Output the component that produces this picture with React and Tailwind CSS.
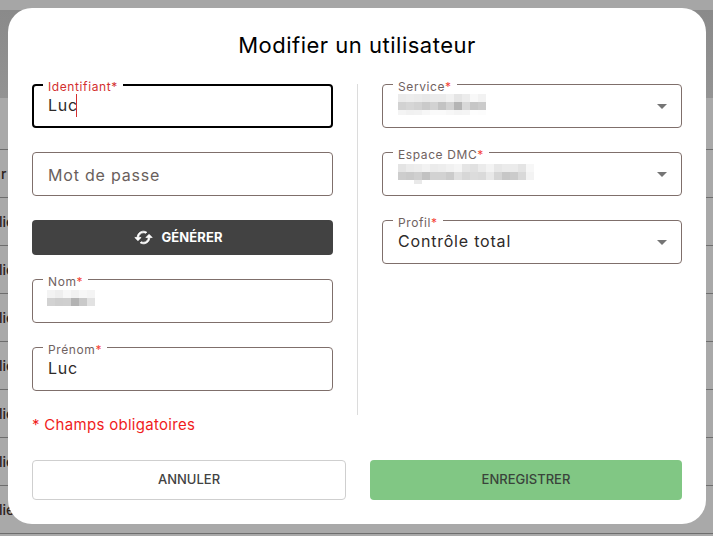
import React from "react";

const font = "font-['Inter','Noto_Sans',sans-serif]";

function Pixels({ rows, w = 8, className = "" }) {
  const total = rows.reduce((a, r) => a + r.h, 0);
  const cols = Math.max(...rows.map((r) => r.c.length));
  let y = 0;
  return (
    <svg width={cols * w} height={total} className={className} shapeRendering="crispEdges">
      {rows.map((r, i) => {
        const top = y;
        y += r.h;
        return r.c.map((c, j) =>
          c ? <rect key={i + "-" + j} x={j * w} y={top} width={w} height={r.h} fill={c} /> : null
        );
      })}
    </svg>
  );
}

function Field({ label, required = true, focused = false, children, caret = false }) {
  return (
    <div
      className={`relative h-[44px] shrink-0 rounded-[4px] bg-white flex items-center pr-[14px] ${
        focused ? "border-2 border-black pl-[14px]" : "border border-[#7f6f6b] pl-[15px]"
      }`}
    >
      {label && (
        <span
          className={`absolute ${focused ? "left-[9px] -top-[5px]" : "left-[10px] -top-[4px]"} bg-white px-[5px] text-[12px] leading-[12px] tracking-[0.6px] ${
            focused ? "text-[#d32f2f]" : "text-[#6f625f]"
          }`}
        >
          {label}
          {required && <span className={focused ? "text-[#d32f2f]" : "text-[#f44336]"}>*</span>}
        </span>
      )}
      <div className="flex-1 min-w-0 flex items-center">{children}</div>
      {caret && (
        <svg width="10" height="5" viewBox="0 0 10 5" className="shrink-0">
          <path d="M0 0h10L5 5z" fill="#757575" />
        </svg>
      )}
    </div>
  );
}

const V = "-mt-[2px] text-[16px] leading-[24px] tracking-[0.8px] text-[#2e2a29]";

export default function App() {
  const rowTexts = ["r", "lie", "lie", "lie", "lie", "lie", "lie", "lie"];
  return (
    <div className={`relative h-[536px] w-[713px] overflow-hidden bg-[#a9a9a9] ${font}`}>
      <div className="h-[10px] bg-[#a6a6a6]" />
      <div className="h-[88px] bg-gradient-to-b from-[#8a8a8a] to-[#939393]" />
      <div className="h-[52px] border-b border-[#6e6e6e]" />
      {rowTexts.map((t, i) => (
        <div key={i} className="h-[48px] border-b border-[#6e6e6e] flex items-center">
          <span className={`text-[14px] font-medium text-[#2b211d] ${i === 0 ? "ml-[1px]" : "-ml-[1px]"}`}>{t}</span>
        </div>
      ))}

      <div className="absolute left-[8px] top-[8px] h-[516px] w-[698px] rounded-[24px] bg-white px-[24px] flex flex-col">
        <h1 className="h-[76px] shrink-0 pt-[22px] text-center text-[22px] leading-[30px] tracking-[0.5px] font-normal text-black">
          Modifier un utilisateur
        </h1>
        <div className="flex h-[351px] shrink-0">
          <div className="w-[301px] flex flex-col">
            <Field label="Identifiant" focused>
              <span className={V}>Luc</span>
              <span className="absolute left-[42px] top-[8px] h-[23px] w-px bg-[#d32f2f]" />
            </Field>
            <div className="mt-[24px]">
              <Field>
                <span className="mt-[1px] text-[16px] leading-[24px] tracking-[0.8px] text-[#6a5f5c]">Mot de passe</span>
              </Field>
            </div>
            <button className="mt-[24px] h-[35px] shrink-0 rounded-[4px] bg-[#424242] text-white flex items-center justify-center gap-[8px] pr-[8px] text-[13px] font-bold tracking-[0.1px]">
              <svg width="19" height="19" viewBox="0 0 24 24" fill="currentColor" stroke="currentColor" strokeWidth="0.9">
                <path d="M19 8l-4 4h3c0 3.31-2.69 6-6 6-1.01 0-1.97-.25-2.8-.7l-1.46 1.46C8.97 19.54 10.43 20 12 20c4.42 0 8-3.58 8-8h3l-4-4zM6 12c0-3.31 2.69-6 6-6 1.01 0 1.97.25 2.8.7l1.46-1.46C15.03 4.46 13.57 4 12 4c-4.42 0-8 3.58-8 8H1l4 4 4-4H6z" />
              </svg>
              GÉNÉRER
            </button>
            <div className="mt-[24px]">
              <Field label="Nom">
                <Pixels
                  className="-ml-[1px] -mt-[6px]"
                  rows={[
                    { h: 8, c: ["#f3f3f3", "#eeeeee", "#f7f7f7", "#f1f1f1", "#f7f7f7", "#f4f4f4"] },
                    { h: 8, c: ["#d2d2d2", "#cecece", "#cfcfcf", "#b3b3b3", "#c9c9c9", "#e2e2e2"] },
                  ]}
                />
              </Field>
            </div>
            <div className="mt-[24px]">
              <Field label="Prénom">
                <span className={V}>Luc</span>
              </Field>
            </div>
            <p className="mt-[24px] text-[15px] leading-[20px] tracking-[0.3px] text-[#f01c1c]">* Champs obligatoires</p>
          </div>
          <div className="ml-[24px] w-px bg-[#dcdcdc] h-[331px]" />
          <div className="ml-[24px] w-[300px] flex flex-col gap-[24px]">
            <Field label="Service" caret>
              <Pixels
                className="-mt-[3px]"
                rows={[
                  { h: 8, c: ["#ebebeb", "#ededed", "#ebebeb", "#e8e8e8", "#ebebeb", "#ebebeb", "#f1f1f1", "#e5e5e5", "#ececec", "#f8f8f8", "#f2f2f2"] },
                  { h: 8, c: ["#d2d2d2", "#d6d6d6", "#d2d2d2", "#cacaca", "#d2d2d2", "#c3c3c3", "#d2d2d2", "#b4b4b4", "#d8d8d8", "#c6c6c6", "#cbcbcb"] },
                  { h: 5, c: ["#f4f4f4", "#f1f1f1", "#f2f2f2", "#f7f7f7", "#fafafa", "#fafafa", "#f7f7f7", "#f4f4f4", "#f5f5f5", "#fdfdfd", "#fcfcfc"] },
                ]}
              />
            </Field>
            <Field label="Espace DMC" caret>
              <Pixels
                rows={[
                  { h: 8, c: ["#e4e4e4", "#ebebeb", "#ededed", "#f2f2f2", "#ebebeb", "#ededed", "#f1f1f1", "#f5f5f5", "#e5e5e5", "#e1e1e1", "#ebebeb", "#f3f3f3", "#e7e7e7", "#ebebeb", "#ebebeb", "#e4e4e4", "#f7f7f7"] },
                  { h: 8, c: ["#cdcdcd", "#cacaca", "#cfcfcf", "#c2c2c2", "#d2d2d2", "#d2d2d2", "#cbcbcb", "#e0e0e0", "#d7d7d7", "#dcdcdc", "#dadada", "#e8e8e8", "#d5d5d5", "#c7c7c7", "#cbcbcb", "#d9d9d9", "#f3f3f3"] },
                  { h: 4, c: [null, null, "#e9e9e9"] },
                ]}
              />
            </Field>
            <Field label="Profil" caret>
              <span className={V}>Contrôle total</span>
            </Field>
          </div>
        </div>
        <div className="mt-[25px] flex justify-between">
          <button className="h-[40px] w-[314px] rounded-[4px] border border-[#cfcfcf] bg-white text-[13px] font-medium text-[#424242]">
            ANNULER
          </button>
          <button className="h-[40px] w-[312px] rounded-[4px] bg-[#81c784] text-[13px] font-medium text-[#3a443b]">
            ENREGISTRER
          </button>
        </div>
      </div>
    </div>
  );
}
